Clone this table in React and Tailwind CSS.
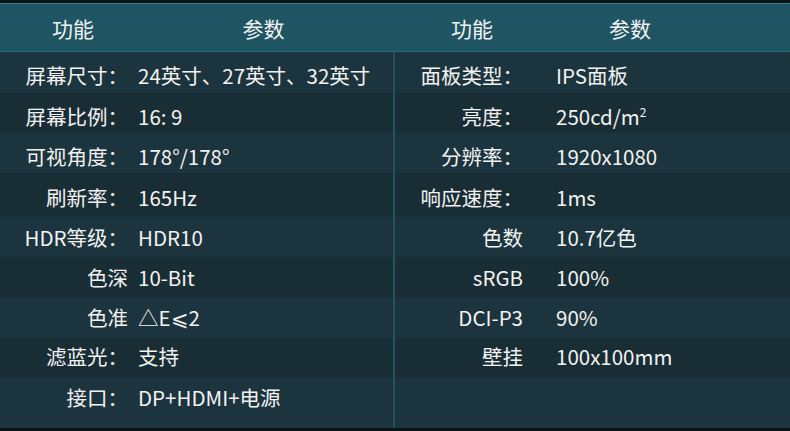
// each row: left label, left value, right label, right value, height, text offset
const rows = [
  ['屏幕尺寸：', '24英寸、27英寸、32英寸', '面板类型：', 'IPS面板', 'h-[41px]', 'pt-[8px]'],
  ['屏幕比例：', '16: 9', '亮度：', <>250cd/m<sup className="text-[12px] -top-[8px]">2</sup></>, 'h-[40px]', 'pt-[8px]'],
  ['可视角度：', '178°/178°', '分辨率：', '1920x1080', 'h-[40px]', 'pt-[8px]'],
  ['刷新率：', '165Hz', '响应速度：', '1ms', 'h-[44px]', 'pt-[9px]'],
  ['HDR等级：', 'HDR10', '色数', '10.7亿色', 'h-[40px]', 'pt-[5px]'],
  ['色深', '10-Bit', 'sRGB', '100%', 'h-[41px]', 'pt-[5px]'],
  ['色准', '△E⩽2', 'DCI-P3', '90%', 'h-[40px]', 'pt-[4px]'],
  ['滤蓝光：', '支持', '壁挂', '100x100mm', 'h-[40px]', 'pt-[3px]'],
  ['接口：', 'DP+HDMI+电源', '', '', 'h-[50px]', 'pt-[4px]'],
];

export default function App() {
  return (
    <div
      className="w-[790px] h-[431px] bg-[#0c1215] flex flex-col text-[#f2f2f2] overflow-hidden"
      style={{ fontFamily: '"Noto Sans CJK SC", "Noto Sans", sans-serif' }}
    >
      <div className="h-[3px] shrink-0" />
      {/* header */}
      <div className="h-[49px] shrink-0 bg-[#1f5462] border-t border-[#2b8090] border-b border-b-[#226574] flex items-center text-[21px] pt-[2px]">
        <div className="w-[146px] text-center">功能</div>
        <div className="w-[247px] text-center pr-[12px]">参数</div>
        <div className="w-[2px]" />
        <div className="w-[154px] text-center">功能</div>
        <div className="w-[162px] text-center">参数</div>
      </div>

      {/* body */}
      <div className="flex flex-col shrink-0 text-[20.5px]">
        {rows.map(([lk, lv, rk, rv, h, pt], i) => (
          <div
            key={i}
            className={`flex ${h} ${i % 2 === 0 ? 'bg-[#1c343d]' : 'bg-[#192d35]'}`}
          >
            <div className={`w-[393px] flex items-start ${pt}`}>
              <div className="w-[128px] text-right">{lk}</div>
              <div className="pl-[10px] whitespace-nowrap">{lv}</div>
            </div>
            <div className="w-[2px] bg-[#1f5462]" />
            <div className={`flex-1 flex items-start ${pt}`}>
              <div className="w-[128px] text-right">{rk}</div>
              <div className="pl-[33px] whitespace-nowrap">{rv}</div>
            </div>
          </div>
        ))}
      </div>
    </div>
  );
}
